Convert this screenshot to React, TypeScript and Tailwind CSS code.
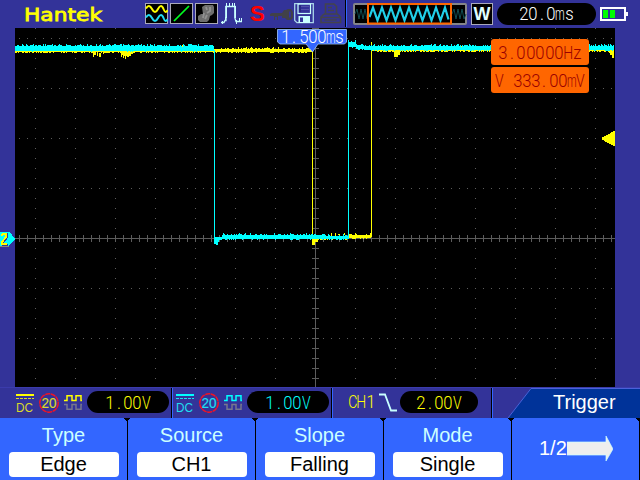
import React from "react";

// Deterministic noise in the range 0..1.
function rand(seed: number) {
  const v = Math.sin(seed * 12.9898 + 78.233) * 43758.5453;
  return v - Math.floor(v);
}

// A noisy horizontal band; each column varies by a pixel or two at both edges.
function band(x0: number, x1: number, top: number, bottom: number, seed: number, up = 0.3, down = 0.3) {
  let d = "";
  for (let x = x0; x < x1; x++) {
    const a = rand(x + seed);
    const b = rand(x * 3 + seed * 7);
    const t = top - (a < up ? (a < up / 4 ? 2 : 1) : 0);
    const u = bottom + (b < down ? 1 : 0);
    d += `M${x} ${t}h1V${u}h-1z`;
  }
  return d;
}

// Fixed-pitch lettering: every character sits in a cell of equal width.
function Pitch({ text, className = "", cell = "w-[9px]" }: { text: string; className?: string; cell?: string }) {
  return (
    <span className={`inline-flex font-['Roboto'] text-[17.5px] font-light ${className}`}>
      {text.split("").map((c, i) => (
        <span key={i} className={`flex shrink-0 justify-center whitespace-pre ${cell}`}>
          <span className={c === "m" ? "scale-x-[0.62]" : c === "H" || c === "V" || c === "C" ? "scale-x-[0.8]" : "scale-x-[0.95]"}>{c}</span>
        </span>
      ))}
    </span>
  );
}

function Graticule() {
  let dots = "";
  for (let x = 35; x < 615; x += 40) {
    for (let y = 28; y < 387; y += 10) dots += `M${x} ${y}h1v1h-1z`;
  }
  for (let y = 38; y < 387; y += 50) {
    for (let x = 19; x < 615; x += 8) dots += `M${x} ${y}h1v1h-1z`;
  }
  let ticks = "M15 238h600v1h-600zM315 28h1v359h-1z";
  for (let x = 19; x < 615; x += 8) ticks += `M${x} 235h1v7h-1z`;
  for (let y = 28; y < 387; y += 10) ticks += `M312 ${y}h7v1h-7z`;
  return (
    <g fill="#5c5c5c">
      <path d={dots} />
      <path d={ticks} />
    </g>
  );
}

function Traces() {
  return (
    <g>
      <path
        fill="#ffff00"
        d={
          band(15, 215, 49, 52, 3, 0, 0.4) +
          band(215, 313, 49, 52, 5, 0.45, 0.3) +
          band(313, 349, 237, 239, 8, 0.2, 0.3) +
          band(349, 371, 235, 238, 9, 0.5, 0.3) +
          band(372, 614, 48, 51, 11, 0.4, 0.6) +
          "M93 52h1v5h-1zM94 52h2v3h-2zM97 53h1v3h-1zM99 53h2v4h-2zM103 52h1v2h-1zM120 52h13v2h-2v2h-2v1h-2v-1h-1v3h-1v-3h-1v2h-1v-3h-1v2h-1v-4h-1zM394 51h6v4h-2v2h-4zM609 51h5v7h-2v-3h-2v-2h-1z" +
          "M312 52h1v192h-1zM312 238h6v4h-3v3h-3zM371 42h1v195h-1z"
        }
      />
      <path
        fill="#00ffff"
        d={
          band(15, 214, 46, 51, 21, 0.6, 0.08) +
          band(349, 356, 42, 47, 24, 0.4, 0.3) +
          band(356, 364, 45, 49, 26, 0.4, 0.3) +
          band(364, 614, 46, 50, 30, 0.5, 0.35) +
          band(222, 326, 235, 239, 33, 0.4, 0.15) +
          band(326, 348, 236, 239, 36, 0.4, 0.3) +
          "M214 50h1v190h-1zM214 237h8v3h-3v2h-1v3h-2v-1h-2zM348 40h1v199h-1z"
        }
      />
      <path fill="#ffff00" d="M331 233h1v3h-1zM335 233h1v3h-1zM338 234h2v1h-2zM344 233h1v2h-1zM461 46h1v1h-1zM182 45h1v2h-1z" />
    </g>
  );
}

function Scope() {
  return (
    <svg width="640" height="359" viewBox="0 28 640 359" className="block shrink-0" shapeRendering="crispEdges">
      <rect x="15" y="28" width="600" height="359" fill="#000" />
      <Graticule />
      <Traces />
      <path d="M615 131v15h-2v-1h-2v-1h-2v-1h-2v-1h-2v-1h-1v-1h-2v-3h2v-1h2v-1h2v-1h2v-1h1v-1z" fill="#ffff00" />
      <path d="M0 232h10l5 7-6 7H0z" fill="#00ffff" />
      <path d="M0 246h9" stroke="#8a8a70" />
      <path d="M2 235l3-1.500h2v4l-4 5v2h5" fill="none" stroke="#333399" strokeWidth="2" />
      <path d="M1 235l3-1h2v3l-4 5v2h5" fill="none" stroke="#ffff00" strokeWidth="2" />
    </svg>
  );
}

function IconBox({ children }: { children: React.ReactNode }) {
  return (
    <svg width="23" height="21" viewBox="0 0 23 21" className="shrink-0">
      <rect x=".5" y=".5" width="22" height="20" fill="#000" stroke="#aaaabb" />
      {children}
    </svg>
  );
}

function Divider({ className }: { className: string }) {
  return <div className={`w-[2px] shrink-0 border-l border-black bg-[#3366ff] ${className}`} />;
}

function Header() {
  return (
    <header className="flex h-7 shrink-0 items-start pl-6">
      <svg width="80" height="22" viewBox="0 0 80 22" className="mt-1 shrink-0">
        <text x="0" y="16.800" textLength="78" lengthAdjust="spacingAndGlyphs" fill="#ffff00" stroke="#ffff00" strokeWidth=".8" fontFamily="DejaVu Sans" fontSize="18.500">
          Hantek
        </text>
      </svg>
      <div className="ml-[41px] mt-[3px] flex gap-[2px]">
        <IconBox>
          <path d="M1 5.500C3 2 5 2 7 6s4 4 6 0 4-4 5.500 0 3 3.500 4 1" fill="none" stroke="#ffff00" strokeWidth="2" />
          <path d="M1 14.500C3 11 5 11 7 15s4 4 6 0 4-4 5.500 0 3 3.500 4 1" fill="none" stroke="#22ddf5" strokeWidth="2" />
        </IconBox>
        <IconBox>
          <path d="M4 18L19 3" stroke="#00ff20" strokeWidth="1.700" />
        </IconBox>
        <IconBox>
          <path d="M7 4l3-2h8l1 2v6l-2 2-2 1-1 4-2 2H5l-2-2v-4l3-2h2z" fill="#6e6e6e" />
          <path d="M11 4l1 3M15 4v4l-3 2M9 10l-1 5M12 12l-2 4" stroke="#929292" strokeWidth="1.800" fill="none" />
        </IconBox>
      </div>
      <svg width="22" height="22" viewBox="0 0 22 22" className="ml-[3px] mt-[2px] shrink-0" fill="none" stroke="#c8ffff">
        <path d="M0 20.500h3l1-2h1V4.500h9v12l1 3h6" strokeWidth="1.300" />
        <path d="M5.200 4v12M14.200 4v12" strokeWidth="1.600" />
        <path d="M1.500 22v-3M4.500 19v-4M5.500 4V1M8.500 4V1M11.500 4V1M13.500 4V1M15.500 22v-4M18.500 19v-3M20.500 19v-3" />
      </svg>
      <span className="ml-[7px] w-[15px] font-['Liberation_Sans'] text-[22px] font-bold leading-7 text-[#ff0000]">S</span>
      <svg width="24" height="14" viewBox="0 0 24 14" className="ml-[4px] mt-2 shrink-0">
        <path d="M1 6l2-1h11v3H9v4H8V9H6v3H5V8H1z" fill="#414148" />
        <path
          fillRule="evenodd"
          d="M15 2h2l2-1h3l2 3v6l-2 2h-4l-2-2h-3V5zM20 3.500v6h1.800v-6z"
          fill="#414148"
        />
      </svg>
      <svg width="21" height="21" viewBox="0 0 21 21" className="ml-[1px] mt-[3px] shrink-0">
        <path d="M.7.700h18.600v19H3L.7 17.500z" fill="#333399" stroke="#a8d4e8" strokeWidth="1.300" />
        <rect x="4" y="1" width="12.500" height="9.500" fill="none" stroke="#c8ffff" strokeWidth="1.200" />
        <path d="M6 2v7" stroke="#20206c" />
        <path d="M7 3.500h8M7 6.500h8" stroke="#6868b4" strokeWidth=".6" />
        <rect x="4.500" y="13" width="11.500" height="7" fill="#c8ffff" />
        <rect x="6" y="14.500" width="3" height="4.500" fill="#333399" />
      </svg>
      <svg width="22" height="21" viewBox="0 0 22 21" className="ml-[5px] mt-[3px] shrink-0" fill="none" stroke="#44444c" strokeWidth="1.600">
        <path d="M5.500 11V1h8.500l2.500 2.500V11zM8 4.500h4M8 7.500h6M4 11h14M4 11l-3 3v5.500h19.500V14l-3-3M1 14.500h19.500M4.500 17h12" />
      </svg>
      <Divider className="ml-[3px] h-[27px]" />
      <svg width="115" height="22" viewBox="0 0 115 22" className="ml-[6px] mt-[3px] shrink-0">
        <rect x="1" y="1" width="112" height="20" rx="1" fill="#000" stroke="#85858a" strokeWidth="2" />
        <path d="M2 11l2-5 2 10 2-10 2 10 2-10 2 10M99 11l2-5 2 10 2-10 2 10 2-10 2 10 2-5" fill="none" stroke="#104b50" />
        <path
          d="M16.500 14L20 4.500l4.500 13 4.500-13 4.500 13 4.500-13 4.500 13 4.500-13 4.500 13 4.500-13 4.500 13 4.500-13 4.500 13 4.500-13 4.500 13 4.500-13 4.500 13 4.500-13 3.500 12"
          fill="none"
          stroke="#20cfe8"
          strokeWidth="2.200"
        />
        <rect x="15" y="1" width="83" height="19.500" fill="none" stroke="#ff6600" strokeWidth="2" />
      </svg>
      <div className="ml-[3px] mt-[3px] flex h-[22px] w-[22px] shrink-0 items-center justify-center border border-[#aaaabb] bg-black font-['Liberation_Sans'] text-[18px] font-bold text-[#e0ffff]">
        W
      </div>
      <div className="ml-[4px] mt-[3px] flex h-[22px] w-[99px] shrink-0 items-center justify-center rounded-full bg-black text-white">
        <Pitch text="20.0ms" className="pt-px" />
      </div>
      <svg width="28" height="14" viewBox="0 0 28 14" className="ml-[4px] mt-[7px] shrink-0" shapeRendering="crispEdges">
        <rect x="1" y="1" width="24" height="12" fill="#333399" stroke="#fff" strokeWidth="2" />
        <rect x="26" y="5" width="2" height="4" fill="#fff" />
        <rect x="3" y="3" width="5" height="8" fill="#00ff00" />
        <rect x="10" y="3" width="5" height="8" fill="#00ff00" />
      </svg>
    </header>
  );
}

function ChannelIcons({ color, dc }: { color: string; dc: string }) {
  return (
    <svg width="68" height="22" viewBox="0 0 68 22" className="shrink-0">
      <g shapeRendering="crispEdges">
        <rect x="0" y="3" width="18" height="2" fill={color} />
        <path d="M0 7.500h18" stroke={dc} strokeDasharray="3 1" />
      </g>
      <text x="0" y="20.500" textLength="17" lengthAdjust="spacingAndGlyphs" fontFamily="Liberation Sans" fontSize="13.500" fill={dc}>
        DC
      </text>
      <text x="25.500" y="17.200" textLength="15" lengthAdjust="spacingAndGlyphs" fontFamily="Liberation Sans" fontSize="15.500" fill={dc} stroke={dc} strokeWidth=".2">
        20
      </text>
      <circle cx="33" cy="12" r="9.200" fill="none" stroke="#f01424" strokeWidth="1.500" strokeDasharray="5 .6" />
      <g fill="none" strokeWidth="1.500">
        <path d="M48 9.500h3V4.800h5v4.700h4V4.800h5v4.700h1" stroke={color} />
        <path d="M48 13.500h3v4.700h5v-4.700h4v4.700h5v-4.700h1" stroke="#77778c" />
      </g>
    </svg>
  );
}

function Reading({ text, className }: { text: string; className: string }) {
  return (
    <div className={`flex h-[22px] shrink-0 items-center justify-center rounded-full bg-black ${className}`}>
      <Pitch text={text} className="pt-[3px]" />
    </div>
  );
}

function StatusBar() {
  return (
    <div className="flex h-[31px] shrink-0 items-start border-t border-[#3b3bac]">
      <div className="ml-4 mt-[3px] flex">
        <ChannelIcons color="#ffff00" dc="#d9d92c" />
        <Reading text="1.00V" className="ml-[3px] w-[82px] text-[#ffff00]" />
      </div>
      <Divider className="ml-[2px] h-[30px]" />
      <div className="ml-[3px] mt-[3px] flex">
        <ChannelIcons color="#00ffff" dc="#20dff0" />
        <Reading text="1.00V" className="ml-[3px] w-[82px] text-[#00ffff]" />
      </div>
      <Divider className="ml-[2px] h-[30px]" />
      <div className="ml-[15px] mt-[3px] flex h-[22px] w-[31px] items-center text-[#ffff00]">
        <Pitch text="CH1" className="pt-px" />
      </div>
      <svg width="19" height="20" viewBox="0 0 19 20" className="mt-[5px] shrink-0">
        <path d="M0 1.500h6l6 16h6" fill="none" stroke="#c8ffff" strokeWidth="1.800" />
      </svg>
      <Reading text="2.00V" className="ml-[2px] mt-[3px] w-[78px] text-[#ffff00]" />
      <Divider className="ml-[13px] h-[30px]" />
      <div className="relative ml-[15px] h-[30px] w-[132px] shrink-0">
        <svg width="132" height="30" viewBox="0 0 132 30" className="block">
          <path d="M0 30L23 0h109v30z" fill="#003399" />
          <path d="M0 30L23 .5h109" fill="none" stroke="#4a62d8" />
        </svg>
        <span className="absolute left-[45px] top-0 font-['Liberation_Sans'] text-[20px] leading-7 text-white">Trigger</span>
      </div>
    </div>
  );
}

function Notch() {
  return (
    <svg width="6" height="3" viewBox="0 0 6 3" className="absolute -right-[3px] top-0 z-10" shapeRendering="crispEdges">
      <path d="M0 0h6v1H5v1H4v1H2V2H1V1H0z" fill="#000" />
    </svg>
  );
}

function MenuItem({ label, value }: { label: string; value: string }) {
  return (
    <div className="relative flex h-full w-32 flex-col items-center border-r border-black pt-[6px]">
      <Notch />
      <div className="h-7 text-[20px] leading-[23px] text-[#ccffff]">{label}</div>
      <div className="flex h-[25px] w-[110px] items-center justify-center rounded-[4px] bg-white text-[20px] leading-[25px] text-black">{value}</div>
    </div>
  );
}

const menu = [
  { label: "Type", value: "Edge" },
  { label: "Source", value: "CH1" },
  { label: "Slope", value: "Falling" },
  { label: "Mode", value: "Single" },
];

export default function App() {
  return (
    <div className="relative flex h-[480px] w-[640px] flex-col overflow-hidden bg-[#333399]">
      <Header />
      <Scope />
      <StatusBar />
      <nav className="flex h-[62px] shrink-0 bg-[#3366ff] font-['Liberation_Sans']">
        {menu.map((m) => (
          <MenuItem key={m.label} {...m} />
        ))}
        <div className="relative flex h-full w-32 items-start border-r border-black pl-[27px] pt-[18px] text-[20px] leading-6 text-white">
          <span>1/2</span>
          <svg width="46" height="26" viewBox="0 0 46 26">
            <path d="M0 6h39V0l7 13-7 12v-6H0z" fill="#eeeeee" stroke="#ccffff" strokeWidth=".7" />
          </svg>
          <Notch />
        </div>
      </nav>
      <div className="absolute left-[277px] top-[29px]">
        <svg width="71" height="25" viewBox="0 0 71 25" className="block">
          <path d="M.5.500h69V13l-2 2H41l-5.500 8L29 15H3L.5 13z" fill="#3366ff" stroke="#9fc6ff" strokeWidth=".8" />
        </svg>
        <div className="absolute inset-x-0 top-0 flex h-[17px] items-center justify-center text-white">
          <Pitch text="1.500ms" />
        </div>
      </div>
      <div className="absolute left-[491px] top-[39px] flex w-[98px] flex-col gap-[2px] text-[#990000]">
        <div className="flex h-[26px] items-center justify-center rounded-[3px] bg-[#ff6600]">
          <Pitch text="3.00000Hz" className="pt-[2px]" cell="w-[9.400px]" />
        </div>
        <div className="flex h-[26px] items-center justify-center rounded-[3px] bg-[#ff6600]">
          <Pitch text="V 333.00mV" className="pt-[2px]" />
        </div>
      </div>
    </div>
  );
}
